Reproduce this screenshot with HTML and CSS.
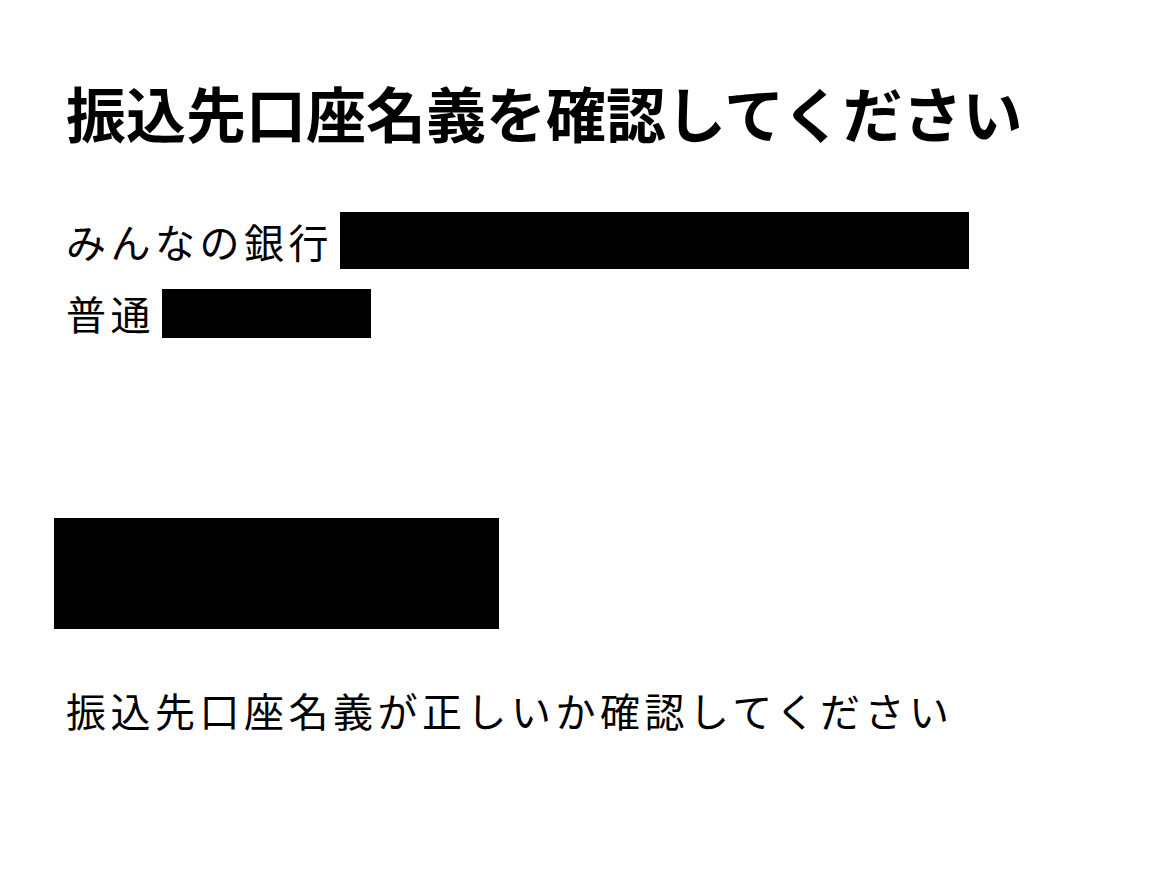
FILE: index.html
```html
<!DOCTYPE html>
<html lang="ja">
<head>
<meta charset="utf-8">
<link rel="stylesheet" href="styles.css">
</head>
<body>
<main class="page">
  <h1 class="title">振込先口座名義を確認してください</h1>
  <div class="account">
    <div class="row row-bank"><span class="label">みんなの銀行</span><span class="redact redact-bank"></span></div>
    <div class="row row-type"><span class="label">普通</span><span class="redact redact-num"></span></div>
  </div>
  <div class="redact redact-name"></div>
  <p class="note">振込先口座名義が正しいか確認してください</p>
</main>
</body>
</html>
```
FILE: styles.css
```css
html, body {
  margin: 0;
  padding: 0;
  background: #fff;
}
body {
  font-family: "Noto Sans CJK JP", "Noto Sans", sans-serif;
  color: #000;
}
.page {
  padding: 74px 0 0 54px;
  display: flex;
  flex-direction: column;
  align-items: flex-start;
}
.title {
  margin: 0 0 0 12px;
  font-size: 60px;
  font-weight: 700;
  line-height: 76px;
  letter-spacing: 0;
}
.account {
  margin: 62px 0 0 12px;
  display: flex;
  flex-direction: column;
  gap: 19px;
}
.row {
  display: flex;
  align-items: center;
}
.label {
  font-size: 40px;
  letter-spacing: 4.5px;
  line-height: 50px;
  font-weight: 400;
}
.redact {
  display: block;
  background: #000;
}
.redact-bank {
  width: 629px;
  height: 57px;
  margin-left: 7px;
}
.redact-num {
  width: 209px;
  height: 49px;
  margin-left: 7px;
}
.redact-name {
  width: 445px;
  height: 111px;
  margin-top: 180px;
}
.note {
  margin: 56px 0 0 12px;
  font-size: 40px;
  letter-spacing: 4.5px;
  line-height: 50px;
  font-weight: 400;
}
```
